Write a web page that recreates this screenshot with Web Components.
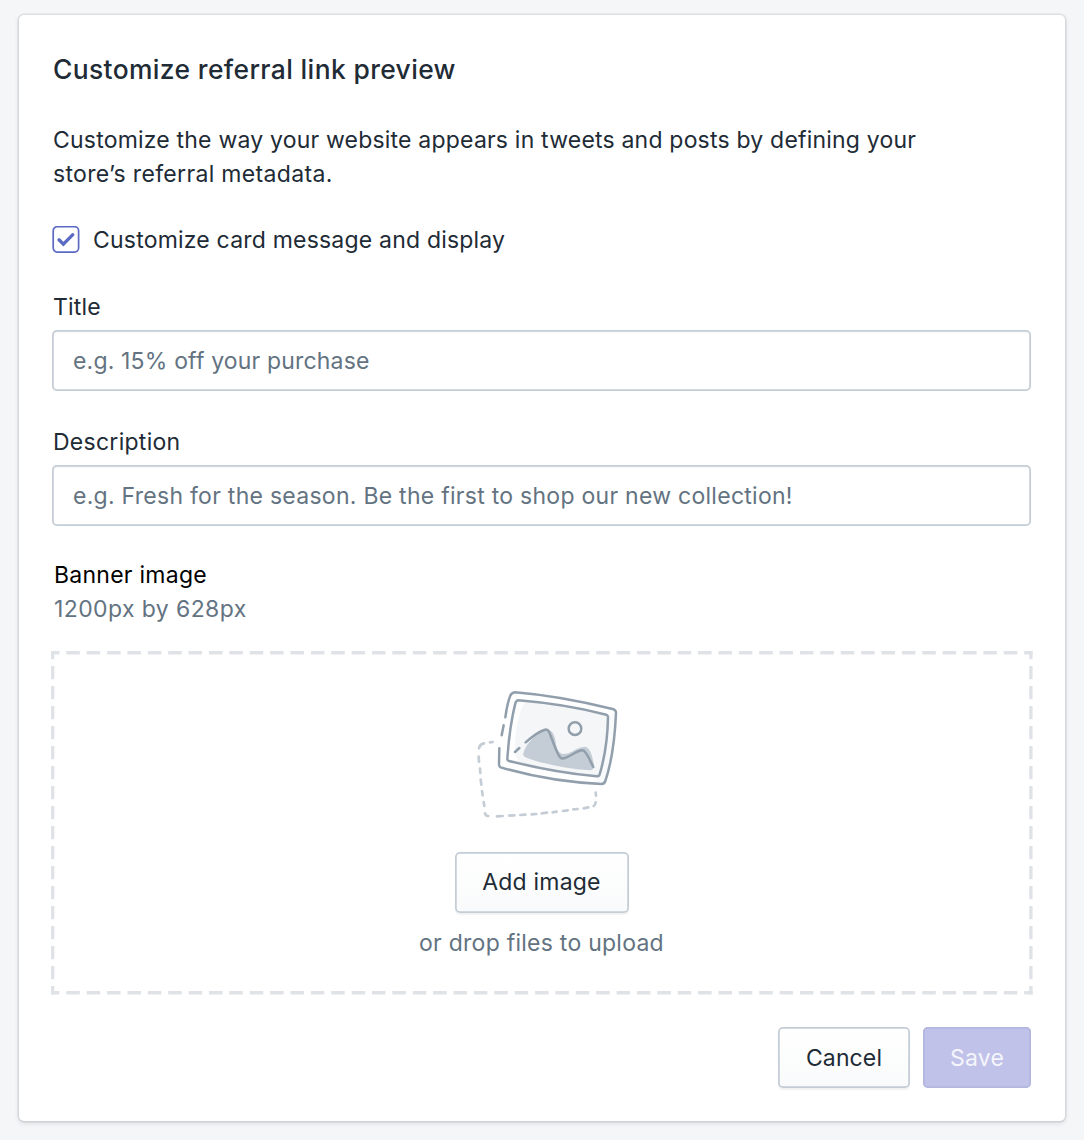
<!DOCTYPE html>
<html lang="en">
<head>
<meta charset="utf-8">
<title>Customize referral link preview</title>
<style>
html,body{margin:0;background:#f4f6f8}
body{box-sizing:border-box;width:1084px;height:1140px;padding:15px 19px 19px;overflow:hidden;font-family:Inter,"Liberation Sans",sans-serif;font-size:23px;line-height:34px;color:#212b36;-webkit-font-smoothing:antialiased}
</style>
</head>
<body>
<preview-page></preview-page>
<script>
function define(name, markup) {
  customElements.define(name, class extends HTMLElement {
    constructor() {
      super();
      this.attachShadow({mode: 'open'}).innerHTML = markup;
    }
  });
}

define('ui-card', `<style>
:host{display:flex;flex-direction:column;box-sizing:border-box;height:1106px;padding:36px 34px 33px 33px;background:#fff;border-radius:5px;box-shadow:0 0 0 1.5px rgba(63,63,68,.1),0 2px 5px rgba(63,63,68,.16)}
h2{margin:0 0 0 1px;font-size:26.4px;line-height:36px;font-weight:500;letter-spacing:.38px}
</style><h2><slot name="title"></slot></h2><slot></slot>`);

define('ui-text', `<style>:host{display:block;white-space:nowrap}</style><slot></slot>`);

define('ui-checkbox', `<style>
:host{display:flex;align-items:center;height:34px;gap:13px}
svg{display:block;width:28px;height:28px}
</style>
<svg viewBox="0 0 28 28" role="checkbox" aria-checked="true"><rect x="1.2" y=".7" width="25.4" height="25.4" rx="4" fill="#fff" stroke="#5c6ac4" stroke-width="1.7"/><path d="M7 13.8 11.4 18.1 20.8 8.7" fill="none" stroke="#5c6ac4" stroke-width="3.3" stroke-linecap="round" stroke-linejoin="miter"/></svg><span><slot></slot></span>`);

define('ui-field', `<style>
:host{display:block}
.label{height:34px;margin:0 0 6px 1px}
.box{display:flex;align-items:center;box-sizing:border-box;height:61px;padding:0 21px;border-radius:5px;background:#fff;box-shadow:inset 0 0 0 1.75px #c4cdd5,inset 0 3px 2px rgba(99,115,129,.06);color:#637381;white-space:nowrap}
</style><div class="label"><slot name="label"></slot></div><div class="box"><span><slot></slot></span></div>`);

define('ui-button', `<style>
:host{display:block}
button{display:flex;align-items:center;justify-content:center;box-sizing:border-box;width:100%;height:61px;margin:0;padding:0;border:0;border-radius:5px;background:linear-gradient(#fff,#f9fafb);box-shadow:inset 0 0 0 1.75px #c4cdd5,0 1.5px 1px rgba(22,29,37,.06);font:inherit;color:inherit;letter-spacing:inherit;white-space:nowrap}
:host([primary]) button{background:#c0c2e9;color:#f5f5fc;box-shadow:inset 0 0 0 1.75px #b3b6dd}
</style><button><slot></slot></button>`);

define('image-illustration', `<style>:host{display:block;width:165px;height:150px}svg{display:block}</style>
<svg width="165" height="150" viewBox="0 0 495 450" fill="none" stroke-linecap="round" stroke-linejoin="round">
<path d="M180 67C160 98 148 158 150 214C151 224 156 241 166 247C245 268 330 282 398 291C410 280 426 170 428 106C350 82 260 68 180 67Z" fill="#f4f6f8"/>
<path d="M388 308 410 280 428 106 450 100C450 170 440 245 421 303Z" fill="#f9fafb"/>
<path d="M175 220C183 191 212 161 242 150C265 148 269 168 272 187C275 209 281 220 294 222C316 224 333 201 361 200C376 202 384 234 387 257C387 265 383 271 375 271C312 267 239 253 184 233Q172 229 175 220Z" fill="#c4cdd5"/>
<circle cx="334" cy="146" r="21" fill="#fff"/>
<g stroke="#919eab" stroke-width="7.5">
<path d="M121 112C124 89 129 65 135 49Q139 38 150 37C239 44 337 61 446 88Q453 91 453 99C450 169 439 250 421 303Q418 312 409 312C304 307 199 289 107 262Q102 260 102 253L103 205"/>
<path d="M116 136 110 166"/>
<path d="M160 61C248 68 337 82 424 104Q429 106 429 112C428 174 419 233 404 283Q402 289 395 289C305 281 217 264 132 243Q126 241 127 235C131 176 138 122 151 70Q154 61 160 61Z"/>
<circle cx="330" cy="146" r="19" fill="#f4f6f8"/>
<path d="M150 216 163 204M182 187C200 171 221 154 240 149Q248 147 252 155C264 182 272 214 285 232Q289 237 296 235C316 230 332 214 350 211Q356 210 360 216C371 228 377 247 385 261"/>
</g>
<g stroke="#c4cdd5" stroke-width="8">
<path d="M83 186 75 187M57 190Q44 193 42 205M41 230 42 245M45 266 46 279M47 299 49 314M51 333 53 346M56 366 58 378M60 400Q62 409 70 408M96 409 113 408M133 407 148 406M166 405 181 404M200 403 214 402M230 400 246 398M263 397 275 395M294 393 308 391M325 388 338 387M356 385 370 382M386 378Q392 374 392 367M393 347 392 338"/>
</g>
</svg>`);

define('drop-zone', `<style>
:host{display:grid;width:982px;height:344px;margin-left:-1px}
svg.edge,.content{grid-area:1/1}
svg.edge{display:block}
.content{display:flex;flex-direction:column;align-items:center;padding-top:29px}
image-illustration{margin-left:10px}
ui-button{width:174px;margin:21.5px 1px 0 0}
.hint{margin:13.5px 1px 0 0;color:#637381;white-space:nowrap;letter-spacing:.25px}
</style>
<svg class="edge" width="982" height="344" fill="none" stroke="#dfe3e8" stroke-width="3.4">
<path d="M0 1.8H981.6M0 341.8H981.6" stroke-dasharray="13.55 6.83" stroke-dashoffset="5.1"/>
<path d="M1.7 .1V343.5M979.9 .1V343.5" stroke-dasharray="13.3 6.7" stroke-dashoffset="5.1"/>
</svg>
<div class="content"><image-illustration></image-illustration><ui-button><slot name="action"></slot></ui-button><div class="hint"><slot></slot></div></div>`);

define('preview-page', `<style>
:host{display:block;width:1046px;letter-spacing:.2px}
.intro{margin:36px 0 0 1px}
.intro span{letter-spacing:.33px}
ui-checkbox{margin-top:32px}
.f1{margin-top:33px;letter-spacing:.17px}
.f2{margin-top:34px;letter-spacing:.27px}
.banner{margin:32px 0 0 2px;color:#000;letter-spacing:.26px}
.size{margin-left:2px;color:#637381;letter-spacing:.4px}
drop-zone{margin-top:25px}
footer{display:flex;justify-content:flex-end;gap:13px;margin-top:32px}
.cancel{width:132px;letter-spacing:.12px}.save{width:108px}
</style>
<ui-card><span slot="title">Customize referral link preview</span>
<ui-text class="intro">Customize the way your website appears in tweets and posts by defining your<br><span>store’s referral metadata.</span></ui-text>
<ui-checkbox>Customize card message and display</ui-checkbox>
<ui-field class="f1"><span slot="label">Title</span>e.g. 15% off your purchase</ui-field>
<ui-field class="f2"><span slot="label">Description</span>e.g. Fresh for the season. Be the first to shop our new collection!</ui-field>
<ui-text class="banner">Banner image</ui-text>
<ui-text class="size">1200px by 628px</ui-text>
<drop-zone><span slot="action">Add image</span>or drop files to upload</drop-zone>
<footer><ui-button class="cancel">Cancel</ui-button><ui-button class="save" primary>Save</ui-button></footer>
</ui-card>`);
</script>
</body>
</html>
